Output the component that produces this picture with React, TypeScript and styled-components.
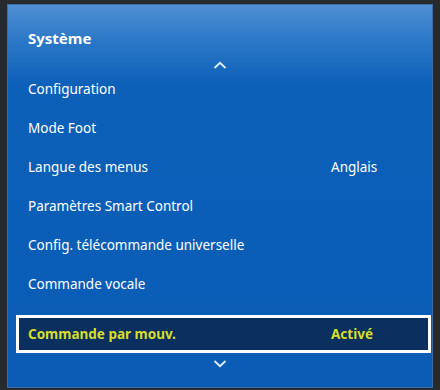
import React from 'react';
import styled, { createGlobalStyle } from 'styled-components';

const GlobalStyle = createGlobalStyle`
    html, body {
        margin: 0;
        padding: 0;
        background: #262a2d;
    }
    body {
        font-family: "Noto Sans", "Open Sans", sans-serif;
    }
`

const Screen = styled.div`
    width: 440px;
    height: 390px;
    padding: 4px 7px 2px 7px;
    box-sizing: border-box;
    background: #262a2d;
`

const Panel = styled.div`
    height: 100%;
    box-sizing: border-box;
    border: 1px solid #3d6fa6;
    background: linear-gradient(to bottom, #5090d3 0px, #2c78c7 35px, #0c60b8 80px, #0a5cb5 100%);
    display: flex;
    flex-direction: column;
    color: #fff;
`

const Title = styled.div`
    font-weight: 700;
    font-size: 15px;
    padding: 23px 0 0 20px;
    height: 30px;
`

const Arrow = styled.div<{ $height: number }>`
    display: flex;
    justify-content: center;
    align-items: center;
    height: ${({ $height }) => $height}px;
`

const List = styled.div`
    display: flex;
    flex-direction: column;
    padding: 0 1px 0 8px;
    margin-top: -3px;
`

const Row = styled.div<{ $active?: boolean }>`
    height: ${({ $active }) => ($active ? 38 : 39)}px;
    margin-top: ${({ $active }) => ($active ? 12 : 0)}px;
    display: grid;
    grid-template-columns: 1fr 97px;
    align-items: center;
    box-sizing: border-box;
    padding-left: 9px;
    font-size: 13.5px;
    color: ${({ $active }) => ($active ? '#d6de2a' : '#fff')};
    font-weight: ${({ $active }) => ($active ? 700 : 400)};
    background: ${({ $active }) => ($active ? '#0b2f5e' : 'transparent')};
    border: 3px solid ${({ $active }) => ($active ? '#fff' : 'transparent')};
`

const Value = styled.span`
    white-space: nowrap;
`

const Chevron = ({ up }: { up?: boolean }) => (
    <svg width="14" height="8" viewBox="0 0 14 8">
        <path
            d={up ? 'M1.5 7 L7 1.8 L12.5 7' : 'M1.5 1 L7 6.2 L12.5 1'}
            fill="none"
            stroke="#e6eef8"
            strokeWidth="1.8"
        />
    </svg>
)

const items: { label: string; value?: string; active?: boolean }[] = [
    { label: 'Configuration' },
    { label: 'Mode Foot' },
    { label: 'Langue des menus', value: 'Anglais' },
    { label: 'Paramètres Smart Control' },
    { label: 'Config. télécommande universelle' },
    { label: 'Commande vocale' },
    { label: 'Commande par mouv.', value: 'Activé', active: true },
]

const App = () => {
    return (
        <Screen>
            <GlobalStyle />
            <Panel>
                <Title>Système</Title>
                <Arrow $height={14}><Chevron up /></Arrow>
                <List>
                    {items.map((item) => (
                        <Row key={item.label} $active={item.active}>
                            <span>{item.label}</span>
                            <Value>{item.value}</Value>
                        </Row>
                    ))}
                </List>
                <Arrow $height={22}><Chevron /></Arrow>
            </Panel>
        </Screen>
    );
};

export default App;
